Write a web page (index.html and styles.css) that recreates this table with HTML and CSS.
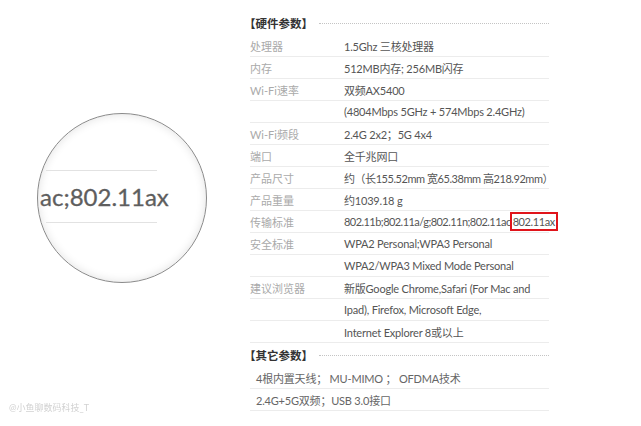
FILE: index.html
```html
<!DOCTYPE html>
<html lang="zh-CN">
<head>
  <meta charset="UTF-8">
  <title>硬件参数</title>
  <link rel="stylesheet" href="styles.css">
</head>
<body>

  <div class="page">

    <div class="zoom-pane">
      <div class="lens">
        <div class="lens-line"></div>
        <div class="lens-text">ac;802.11ax</div>
        <div class="lens-line"></div>
      </div>
      <div class="watermark">@小鱼聊数码科技_T</div>
    </div>

    <div class="specs">
      <div class="spec-head">
        <span>【硬件参数】</span>
        <i class="dots"></i>
      </div>
      <div class="row"><span class="label">处理器</span><span class="value">1.5Ghz 三核处理器</span></div>
      <div class="row"><span class="label">内存</span><span class="value">512MB内存; 256MB闪存</span></div>
      <div class="row"><span class="label">Wi-Fi速率</span><span class="value">双频AX5400</span></div>
      <div class="row"><span class="label"></span><span class="value">(4804Mbps 5GHz + 574Mbps 2.4GHz)</span></div>
      <div class="row"><span class="label">Wi-Fi频段</span><span class="value">2.4G 2x2；5G 4x4</span></div>
      <div class="row"><span class="label">端口</span><span class="value">全千兆网口</span></div>
      <div class="row"><span class="label">产品尺寸</span><span class="value tight">约（长155.52mm 宽65.38mm 高218.92mm）</span></div>
      <div class="row"><span class="label">产品重量</span><span class="value">约1039.18 g</span></div>
      <div class="row"><span class="label">传输标准</span><span class="value tighter">802.11b;802.11a/g;802.11n;802.11ac<span class="mark">802.11ax</span></span></div>
      <div class="row"><span class="label">安全标准</span><span class="value">WPA2 Personal;WPA3 Personal</span></div>
      <div class="row"><span class="label"></span><span class="value">WPA2/WPA3 Mixed Mode Personal</span></div>
      <div class="row"><span class="label">建议浏览器</span><span class="value">新版Google Chrome,Safari (For Mac and</span></div>
      <div class="row"><span class="label"></span><span class="value">Ipad), Firefox, Microsoft Edge,</span></div>
      <div class="row"><span class="label"></span><span class="value">Internet Explorer 8或以上</span></div>

      <div class="spec-head">
        <span>【其它参数】</span>
        <i class="dots"></i>
      </div>
      <div class="row wide"><span class="value">4根内置天线； MU-MIMO ； OFDMA技术</span></div>
      <div class="row wide"><span class="value">2.4G+5G双频；USB 3.0接口</span></div>
    </div>

  </div>

</body>
</html>
```

FILE: styles.css
```css
* {
  box-sizing: border-box;
}

body {
  margin: 0;
  background: #fff;
  font-family: Lato, "Noto Sans CJK SC", sans-serif;
  width: 641px;
  height: 426px;
  overflow: hidden;
}

.page {
  display: flex;
}

/* magnifier on the left */
.zoom-pane {
  width: 244px;
  height: 426px;
  padding: 113px 0 0 37px;
  display: flex;
  flex-direction: column;
}

.lens {
  width: 170px;
  height: 170px;
  border-radius: 50%;
  border: 1.5px solid #8a8a8a;
  box-shadow: inset 0 0 10px rgba(0, 0, 0, 0.12);
  overflow: hidden;
  padding-top: 56px;
}

.lens-line {
  margin-left: 8px;
  width: 111px;
  height: 1px;
  background: #e2e2e2;
}

.lens-text {
  height: 51px;
  line-height: 51px;
  padding-left: 2px;
  font-size: 24px;
  color: #5e5e5e;
  -webkit-text-stroke: 0.3px #5e5e5e;
}

.watermark {
  margin: auto 0 12px -28px;
  font-size: 9px;
  color: #d2d2d2;
  filter: blur(0.6px);
}

/* spec table */
.specs {
  width: 305px;
  padding-top: 11px;
}

.spec-head {
  display: flex;
  align-items: center;
  height: 24px;
  font-size: 11.5px;
  font-weight: bold;
  color: #333;
}

.dots {
  flex: 1;
  margin-left: 6px;
  border-top: 1px dotted #c4c4c4;
}

.row {
  display: flex;
  align-items: center;
  height: 22px;
  margin-left: 6px;
  border-bottom: 1px solid #ececec;
  font-size: 11px;
}

.label {
  flex: none;
  width: 94px;
  color: #aaa;
}

.value {
  color: #555;
  white-space: nowrap;
  letter-spacing: -0.2px;
}

.value.tight {
  letter-spacing: -0.45px;
}

.value.tighter {
  letter-spacing: -0.55px;
}

.row.wide .value {
  padding-left: 6px;
  color: #666;
}

.mark {
  outline: 2px solid #e0141b;
  outline-offset: 1px;
  margin-left: 2px;
  letter-spacing: -0.4px;
}
```
